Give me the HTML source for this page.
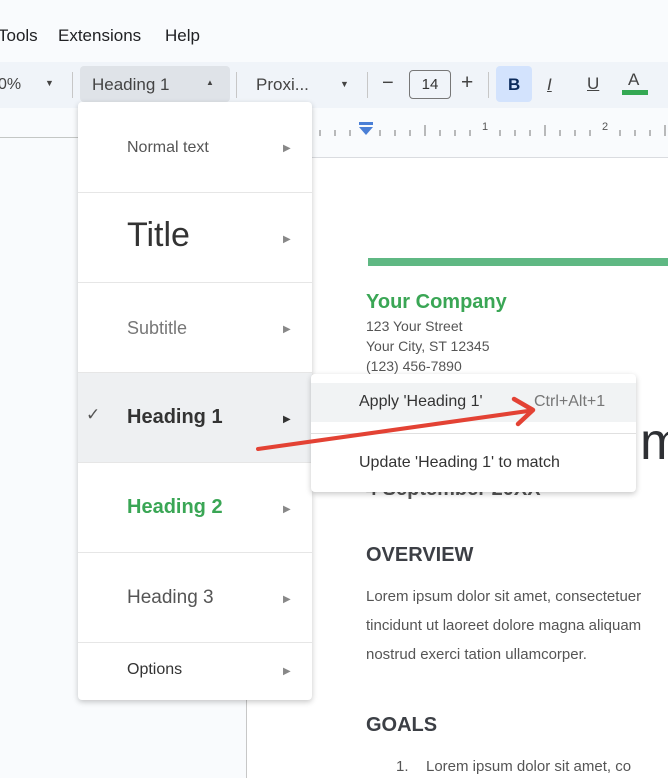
<!DOCTYPE html>
<html><head><meta charset="utf-8"><style>
*{margin:0;padding:0;box-sizing:border-box}
body{width:668px;height:778px;overflow:hidden;position:relative;background:#f9fbfd;font-family:"Liberation Sans",sans-serif;color:#3c4043}
.a{position:absolute;white-space:nowrap}
.menu{left:78px;top:102px;width:234px;height:598px;background:#fff;box-shadow:0 2px 6px rgba(0,0,0,.22);border-radius:4px}
.row{position:absolute;left:0;width:234px;border-bottom:1px solid #e6e6e6}
.arr{position:absolute;left:205px;font-size:10px;color:#888}
.doc{color:#3c3f45}
</style></head><body>
<div class="a" style="left:0;top:0;width:668px;height:62px;background:#f9fbfd"></div>
<div class="a" style="left:-2px;top:26px;font-size:17px;color:#202124">Tools</div>
<div class="a" style="left:58px;top:26px;font-size:17px;color:#202124">Extensions</div>
<div class="a" style="left:165px;top:26px;font-size:17px;color:#202124">Help</div>
<div class="a" style="left:0;top:62px;width:668px;height:46px;background:#f0f4f9"></div>
<div class="a" style="left:-2px;top:76px;font-size:16px;color:#444">0%</div>
<div class="a" style="left:45px;top:78px;font-size:9px;color:#444">▼</div>
<div class="a" style="left:72px;top:72px;width:1px;height:26px;background:#c7c7c7"></div>
<div class="a" style="left:80px;top:66px;width:150px;height:36px;background:#dfe3e8;border-radius:4px"></div>
<div class="a" style="left:92px;top:75px;font-size:17px;color:#444">Heading 1</div>
<div class="a" style="left:206px;top:78px;font-size:8px;color:#444">▲</div>
<div class="a" style="left:236px;top:72px;width:1px;height:26px;background:#c7c7c7"></div>
<div class="a" style="left:256px;top:75px;font-size:17px;color:#444">Proxi...</div>
<div class="a" style="left:340px;top:79px;font-size:9px;color:#444">▼</div>
<div class="a" style="left:367px;top:72px;width:1px;height:26px;background:#c7c7c7"></div>
<div class="a" style="left:382px;top:72px;font-size:20px;color:#444">−</div>
<div class="a" style="left:409px;top:70px;width:42px;height:29px;border:1px solid #777;border-radius:4px;font-size:15px;text-align:center;line-height:27px;color:#333">14</div>
<div class="a" style="left:461px;top:71px;font-size:21px;color:#444">+</div>
<div class="a" style="left:488px;top:72px;width:1px;height:26px;background:#c7c7c7"></div>
<div class="a" style="left:496px;top:66px;width:36px;height:36px;background:#d3e3fd;border-radius:4px"></div>
<div class="a" style="left:508px;top:75px;font-size:17px;font-weight:bold;color:#0b2b5c">B</div>
<div class="a" style="left:547px;top:75px;font-size:17px;font-style:italic;color:#444;text-decoration:underline">I</div>
<div class="a" style="left:587px;top:74px;font-size:17px;color:#444;text-decoration:underline">U</div>
<div class="a" style="left:628px;top:70px;font-size:17px;color:#444">A</div>
<div class="a" style="left:622px;top:90px;width:26px;height:5px;background:#34a853"></div>
<div class="a" style="left:0;top:137px;width:668px;height:1px;background:#c4c7c5"></div>
<div class="a" style="left:312px;top:110px;width:356px;height:48px;background:#f9fbfd"></div>
<div class="a" style="left:312px;top:157px;width:356px;height:1px;background:#dadce0"></div>
<svg class="a" style="left:312px;top:118px" width="356" height="22">
<g stroke="#777" stroke-width="1">
<line x1="8" y1="12" x2="8" y2="18"/><line x1="23" y1="12" x2="23" y2="18"/><line x1="38" y1="12" x2="38" y2="18"/>
<line x1="68" y1="12" x2="68" y2="18"/><line x1="83" y1="12" x2="83" y2="18"/><line x1="98" y1="12" x2="98" y2="18"/>
<line x1="113" y1="7" x2="113" y2="18"/><line x1="128" y1="12" x2="128" y2="18"/><line x1="143" y1="12" x2="143" y2="18"/><line x1="158" y1="12" x2="158" y2="18"/>
<line x1="188" y1="12" x2="188" y2="18"/><line x1="203" y1="12" x2="203" y2="18"/><line x1="218" y1="12" x2="218" y2="18"/>
<line x1="233" y1="7" x2="233" y2="18"/><line x1="248" y1="12" x2="248" y2="18"/><line x1="263" y1="12" x2="263" y2="18"/><line x1="278" y1="12" x2="278" y2="18"/>
<line x1="308" y1="12" x2="308" y2="18"/><line x1="323" y1="12" x2="323" y2="18"/><line x1="338" y1="12" x2="338" y2="18"/><line x1="353" y1="7" x2="353" y2="18"/>
</g>
<rect x="47" y="4" width="14" height="3" fill="#4a7fd6"/>
<polygon points="47,9 61,9 54,17" fill="#4a7fd6"/>
<text x="170" y="12" font-size="11" fill="#555" font-family="Liberation Sans">1</text>
<text x="290" y="12" font-size="11" fill="#555" font-family="Liberation Sans">2</text>
</svg>
<div class="a" style="left:246px;top:158px;width:422px;height:620px;background:#fff;border-left:1px solid #c7c7c7"></div>
<div class="a" style="left:368px;top:258px;width:300px;height:8px;background:#5fb883"></div>
<div class="a" style="left:366px;top:291px;font-size:20px;font-weight:bold;color:#3aa655">Your Company</div>
<div class="a doc" style="left:366px;top:318px;font-size:14px;color:#555">123 Your Street</div>
<div class="a doc" style="left:366px;top:338px;font-size:14px;color:#555">Your City, ST 12345</div>
<div class="a doc" style="left:366px;top:358px;font-size:14px;color:#555">(123) 456-7890</div>
<div class="a doc" style="left:640px;top:412px;font-size:52px;color:#2e3034">m</div>
<div class="a doc" style="left:366px;top:478px;font-size:20px;font-weight:bold;color:#555">4 September 20XX</div>
<div class="a doc" style="left:366px;top:544px;font-size:20px;font-weight:bold">OVERVIEW</div>
<div class="a doc" style="left:366px;top:588px;font-size:15px;color:#555">Lorem ipsum dolor sit amet, consectetuer</div>
<div class="a doc" style="left:366px;top:617px;font-size:15px;color:#555">tincidunt ut laoreet dolore magna aliquam</div>
<div class="a doc" style="left:366px;top:646px;font-size:15px;color:#555">nostrud exerci tation ullamcorper.</div>
<div class="a doc" style="left:366px;top:714px;font-size:20px;font-weight:bold">GOALS</div>
<div class="a doc" style="left:396px;top:758px;font-size:15px;color:#555">1.</div>
<div class="a doc" style="left:426px;top:758px;font-size:15px;color:#555">Lorem ipsum dolor sit amet, co</div>
<div class="a menu">
<div class="row" style="top:0;height:91px"><span class="a" style="left:49px;top:37px;font-size:16px;color:#555">Normal text</span><span class="arr" style="top:41px">▶</span></div>
<div class="row" style="top:91px;height:90px"><span class="a" style="left:49px;top:23px;font-size:34px;color:#333">Title</span><span class="arr" style="top:41px">▶</span></div>
<div class="row" style="top:181px;height:90px"><span class="a" style="left:49px;top:35px;font-size:18px;color:#777">Subtitle</span><span class="arr" style="top:41px">▶</span></div>
<div class="row" style="top:271px;height:90px;background:#eef0f2"><span class="a" style="left:8px;top:32px;font-size:17px;color:#555">✓</span><span class="a" style="left:49px;top:33px;font-size:20px;font-weight:bold;color:#333">Heading 1</span><span class="arr" style="top:41px;color:#333">▶</span></div>
<div class="row" style="top:361px;height:90px"><span class="a" style="left:49px;top:33px;font-size:20px;font-weight:bold;color:#3aa655">Heading 2</span><span class="arr" style="top:41px">▶</span></div>
<div class="row" style="top:451px;height:90px"><span class="a" style="left:49px;top:34px;font-size:19px;color:#555">Heading 3</span><span class="arr" style="top:41px">▶</span></div>
<div class="row" style="top:541px;height:57px;border:none"><span class="a" style="left:49px;top:18px;font-size:16px;color:#333">Options</span><span class="arr" style="top:23px">▶</span></div>
</div>
<div class="a" style="left:311px;top:374px;width:325px;height:118px;background:#fff;box-shadow:0 2px 6px rgba(0,0,0,.22);border-radius:4px">
<div class="a" style="left:0;top:9px;width:325px;height:39px;background:#f1f3f4"></div>
<div class="a" style="left:0;top:59px;width:325px;height:1px;background:#e0e0e0"></div>
<div class="a" style="left:48px;top:19px;font-size:16px;color:#333">Apply 'Heading 1'</div>
<div class="a" style="left:223px;top:19px;font-size:16px;color:#777">Ctrl+Alt+1</div>
<div class="a" style="left:48px;top:80px;font-size:16px;color:#333">Update 'Heading 1' to match</div>
</div>
<svg class="a" style="left:0;top:0" width="668" height="778">
<line x1="258" y1="449" x2="528" y2="411" stroke="#e34234" stroke-width="4" stroke-linecap="round"/>
<polyline points="514,399 533,410 518,424" fill="none" stroke="#e34234" stroke-width="4.5" stroke-linecap="round" stroke-linejoin="round"/>
</svg>
</body></html>
